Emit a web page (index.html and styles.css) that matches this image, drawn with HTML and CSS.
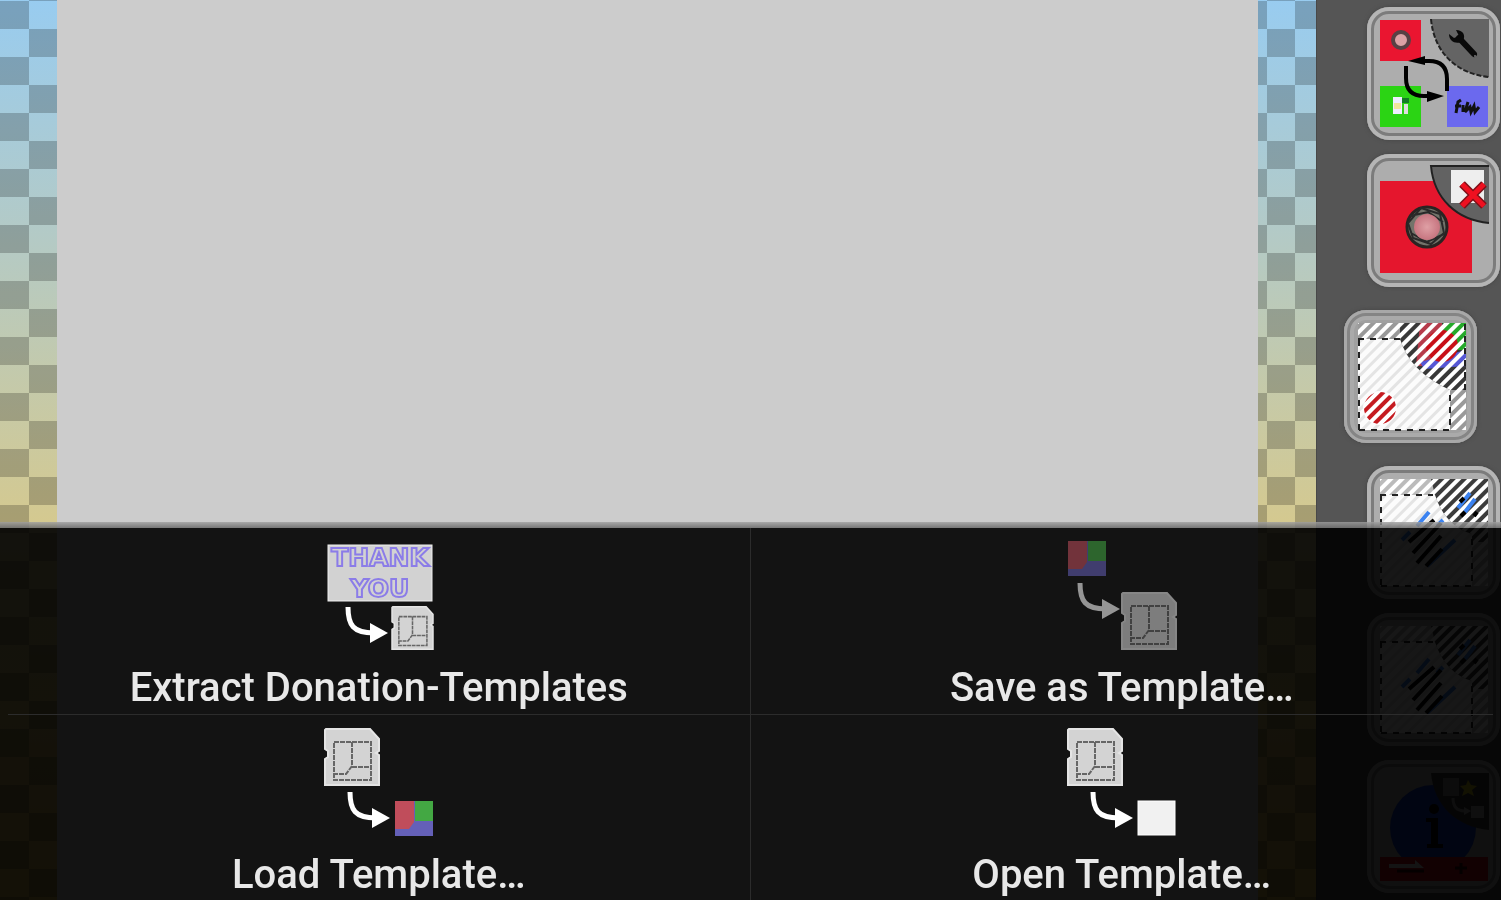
FILE: index.html
```
<!DOCTYPE html>
<html lang="en">
<head>
    <meta charset="utf-8">
    <title>Templates</title>
    <link rel="stylesheet" href="styles.css">
</head>
<body>
    <svg class="defs" aria-hidden="true">
        <defs>
            <pattern id="hatch" width="8" height="8" patternUnits="userSpaceOnUse" patternTransform="rotate(45)">
                <rect width="4" height="8" fill="#fff"/>
            </pattern>
            <pattern id="hatch-light" width="8" height="8" patternUnits="userSpaceOnUse" patternTransform="rotate(45)">
                <rect width="8" height="8" fill="#fcfcfc"/>
                <rect width="3" height="8" fill="#e4e4e4"/>
            </pattern>
            <radialGradient id="lens">
                <stop offset="0" stop-color="#dfa0a5"/>
                <stop offset="1" stop-color="#c77580"/>
            </radialGradient>
            <symbol id="card" viewBox="0 0 56 58">
                <path d="M2 1H46L55 11V23L52 25L55 27V57H1V31L4 29V23L1 21V2Z" fill="#d3d3d3" stroke="#e4e4e4" stroke-width="2"/>
                <path d="M10 14H47V52H10ZM28 14V38L22 46H10M28 39H47" fill="none" stroke="#666" stroke-width="2" stroke-dasharray="5 1"/>
            </symbol>
            <symbol id="arrow" viewBox="0 0 44 38">
                <path d="M3 1C3 19 8 27 29 27" fill="none" stroke="#fff" stroke-width="5"/>
                <path d="M25 17L43 27L25 37Z" fill="#fff"/>
            </symbol>
            <symbol id="panels" viewBox="0 0 38 35">
                <rect width="38" height="35" fill="#6460b8"/>
                <path d="M0 0H19V21L14 28H0Z" fill="#c04d5b"/>
                <path d="M20 0H38V20H20Z" fill="#43a843"/>
            </symbol>
            <symbol id="pen" viewBox="0 0 133 133">
                <rect x="13" y="13" width="108" height="107" fill="url(#hatch-light)"/>
                <path d="M13 13H121V120H105V68Q78 60 68 29H13Z" fill="#3c3c3c"/>
                <path d="M13 13H64L68 29H13ZM105 76H121V120H105Z" fill="#bbb"/>
                <path d="M13 13H121V120H105V68Q78 60 68 29H13Z" fill="url(#hatch)"/>
                <path d="M13 29H66M14 29V120M14 120H105V72" fill="none" stroke="#222" stroke-width="2" stroke-dasharray="6 6"/>
                <path d="M35 74L43 66M50 60L62 46M60 100L88 74M70 60L76 54M91 42L103 27M98 46L108 33" stroke="#3b82f0" stroke-width="4"/>
                <path d="M42 76L67 54M46 87L74 57M50 97L74 70M59 100L75 83M94 50L98 46M93 36L97 32M107 50L110 46" stroke="#000" stroke-width="4"/>
            </symbol>
        </defs>
    </svg>

    <main class="editor">
        <div class="checker checker-left"></div>
        <div class="page"></div>
        <div class="checker checker-right"></div>
        <div class="toolbar">
            <div class="tool-group">
                <button class="tool" aria-label="Switch tool">
                    <svg viewBox="0 0 133 133">
                        <rect x="13" y="13" width="41" height="41" fill="#ea1530"/>
                        <circle cx="34" cy="33" r="8" fill="#dca1a5" stroke="#594044" stroke-width="4"/>
                        <rect x="13" y="79" width="41" height="41" fill="#2bd414"/>
                        <path d="M26 90H35V107H26Z" fill="#eef"/>
                        <path d="M27 96H34V102H27Z" fill="#f0e69a"/>
                        <path d="M35 91H42V96H35Z" fill="#137b25"/>
                        <path d="M37 97H41V107H37Z" fill="#ddd"/>
                        <rect x="80" y="79" width="41" height="41" fill="#6b69ee"/>
                        <path d="M89 106L91 95L94 93M88 99H94M96 105V98M101 95L98 105L103 100L104 105L107 99L108 105L112 100" fill="none" stroke="#111" stroke-width="3"/>
                        <path d="M64 12H122V70C90 67 67 46 64 12Z" fill="#646464"/>
                        <path d="M64 12C67 46 90 67 122 70" fill="none" stroke="#222" stroke-width="2" stroke-dasharray="5 2"/>
                        <path d="M92 31L107 47" stroke="#090909" stroke-width="6" stroke-linecap="round"/>
                        <path d="M82 27C82 35 90 38 96 34C99 28 96 23 89 23L92 29L87 31Z" fill="#090909"/>
                        <circle cx="108" cy="49" r="1" fill="#777"/>
                        <path d="M80 84V72Q80 54 62 54H50M39 59V71Q39 89 57 89H65" fill="none" stroke="#000" stroke-width="4"/>
                        <path d="M41 54L58 49V58ZM77 89L60 84V95Z"/>
                    </svg>
                </button>
                <button class="tool" aria-label="Remove panel">
                    <svg viewBox="0 0 133 133">
                        <rect x="13" y="27" width="92" height="92" fill="#e5162d"/>
                        <circle cx="60" cy="73" r="20" fill="#73736a" stroke="#2a2422" stroke-width="3"/>
                        <path d="M54 54L73 60L77 79L64 90L46 84L41 69ZM43 62L61 58L76 68M77 80L60 88L44 79" fill="none" stroke="#292929" stroke-width="2"/>
                        <circle cx="60" cy="73" r="13" fill="url(#lens)"/>
                        <path d="M64 12H122V69C90 66 67 45 64 12Z" fill="#626262"/>
                        <path d="M122 12H64C67 45 90 66 122 69" fill="none" stroke="#222" stroke-width="2"/>
                        <rect x="84" y="16" width="33" height="33" fill="#eee"/>
                        <path d="M95 30L117 52M117 30L95 52" stroke="#7e1018" stroke-width="8"/>
                        <path d="M95 30L117 52M117 30L95 52" stroke="#ef1020" stroke-width="5"/>
                    </svg>
                </button>
            </div>
            <div class="tool-group">
                <button class="tool tool-active" aria-label="Layers">
                    <svg viewBox="0 0 133 133">
                        <rect x="14" y="13" width="108" height="107" fill="url(#hatch-light)"/>
                        <circle cx="36" cy="98" r="16" fill="#c51b20"/>
                        <path d="M56 13H122V80H106Q66 62 56 29Z" fill="#383838"/>
                        <path d="M76 13H98V56H72Z" fill="#b63b4b"/>
                        <path d="M99 13H122V40H99Z" fill="#25a92a"/>
                        <path d="M76 52L122 40V56L80 59Z" fill="#5557d4"/>
                        <circle cx="98" cy="36" r="16" fill="#c80f17"/>
                        <path d="M14 13H56V29H14ZM106 80H122V120H106Z" fill="#999"/>
                        <path d="M14 13H122V120H106V80Q66 62 56 29H14Z" fill="url(#hatch)"/>
                        <circle cx="36" cy="98" r="17" fill="url(#hatch)"/>
                        <path d="M14 29H56M15 30V120M15 120H106V80M121 14V80" fill="none" stroke="#222" stroke-width="2" stroke-dasharray="6 6"/>
                    </svg>
                </button>
            </div>
            <div class="tool-group">
                <button class="tool" aria-label="Pen"><svg><use href="#pen"/></svg></button>
                <button class="tool" aria-label="Eraser"><svg><use href="#pen"/></svg></button>
                <button class="tool" aria-label="Info">
                    <svg viewBox="0 0 133 133">
                        <circle cx="66" cy="68" r="43" fill="#123bc0"/>
                        <circle cx="67" cy="49" r="5"/>
                        <path d="M59 58H71V84H76V88H60V84H64V62H59Z"/>
                        <rect x="13" y="97" width="108" height="24" fill="#c50d16"/>
                        <path d="M22 104H48V100L57 108H22Z" fill="#ddd"/>
                        <path d="M30 111H57M94 103V114M88 108H100" stroke="#300" stroke-width="3"/>
                        <path d="M64 13H122V70C90 67 67 46 64 13Z" fill="#3c3c3c"/>
                        <path d="M76 18H92V36H76Z" fill="#888"/>
                        <path d="M101 20L104 25L110 26L105 30L107 36L101 33L95 36L97 30L93 26L99 25Z" fill="#d1c21b"/>
                        <path d="M86 38Q86 51 98 51" fill="none" stroke="#999" stroke-width="3"/>
                        <path d="M97 47L104 51L97 55ZM104 46H117V58H104Z" fill="#aaa"/>
                    </svg>
                </button>
            </div>
        </div>
    </main>

    <div class="menu">
        <button class="menu-item">
            <svg class="menu-icon" viewBox="0 0 112 112">
                <rect x="5" y="5" width="104" height="56" fill="#d2d2d2" stroke="#eee"/>
                <text class="thanks" x="57" y="26">THANK</text>
                <text class="thanks" x="57" y="57">YOU</text>
                <use href="#arrow" x="22" y="66" width="44" height="38"/>
                <use href="#card" x="68" y="66" width="43" height="44"/>
            </svg>
            <span>Extract Donation-Templates</span>
        </button>
        <button class="menu-item" disabled>
            <svg class="menu-icon" viewBox="0 0 112 112">
                <use href="#panels" x="2" y="1" width="38" height="35"/>
                <use href="#arrow" x="11" y="42" width="44" height="38"/>
                <use href="#card" x="55" y="52" width="56" height="58"/>
            </svg>
            <span>Save as Template…</span>
        </button>
        <button class="menu-item">
            <svg class="menu-icon" viewBox="0 0 112 112">
                <use href="#card" x="1" y="1" width="56" height="58"/>
                <use href="#arrow" x="24" y="64" width="44" height="38"/>
                <use href="#panels" x="72" y="74" width="38" height="35"/>
            </svg>
            <span>Load Template…</span>
        </button>
        <button class="menu-item">
            <svg class="menu-icon" viewBox="0 0 112 112">
                <use href="#card" x="1" y="1" width="56" height="58"/>
                <use href="#arrow" x="24" y="64" width="44" height="38"/>
                <rect x="72" y="74" width="37" height="34" fill="#f1f1f1" stroke="#fff"/>
            </svg>
            <span>Open Template…</span>
        </button>
    </div>
</body>
</html>
```
FILE: styles.css
```
* {
    box-sizing: border-box;
}

body {
    margin: 0;
    background: #555;
    font-family: Roboto, sans-serif;
    overflow: hidden;
}

button {
    border: none;
    padding: 0;
    background: none;
    font: inherit;
    cursor: pointer;
}

.defs {
    position: absolute;
    width: 0;
    height: 0;
}

.editor {
    display: grid;
    grid-template-columns: 57px 1fr 58px 185px;
    height: 100vh;
}

.page {
    background: #ccc;
}

.checker {
    background-image:
        conic-gradient(rgba(0, 0, 0, 0.21) 25%, transparent 0 50%, rgba(0, 0, 0, 0.21) 0 75%, transparent 0),
        linear-gradient(#98ccf0, #b4cac5 240px, #d4c990 520px, #d8b850);
    background-size: 56px 56px, 100% 100%;
}

.checker-left {
    background-size: 58px 56px, 100% 100%;
    background-position: 0 -27px, 0 0;
}

.checker-right {
    background-position: -19px -27px, 0 0;
}

.toolbar {
    display: flex;
    flex-direction: column;
    gap: 23px;
    padding: 7px 1px 0 0;
    background: #555;
    border-left: 1px solid #484848;
}

.tool-group {
    display: flex;
    flex-direction: column;
    align-items: flex-end;
    gap: 14px;
}

.tool {
    width: 133px;
    height: 133px;
    border-radius: 22px;
    background: #adadad;
    box-shadow: inset 0 0 0 4px #b5b5b5, inset 0 0 0 7px #7c7c7c, 0 0 4px #444;
}

.tool-active {
    margin-right: 23px;
    background: #a0a0a0;
    box-shadow: inset 0 0 0 3px #a8a8a8, inset 0 0 0 6px #858585, inset 0 0 0 10px #aaa, 0 0 4px #444;
}

.tool svg {
    display: block;
    width: 133px;
    height: 133px;
}

/* options menu over the editor */
.menu {
    position: fixed;
    left: 0;
    right: 0;
    bottom: 0;
    display: grid;
    grid-template-columns: 1fr 1fr;
    padding: 6px 8px 0;
    background:
        linear-gradient(rgba(160, 160, 160, 0.8), rgba(110, 110, 110, 0.9)) top / 100% 6px no-repeat,
        linear-gradient(rgba(0, 0, 0, 0.91), rgba(0, 0, 0, 0.91)) 0 6px no-repeat;
}

.menu-item {
    display: flex;
    flex-direction: column;
    align-items: center;
    gap: 16px;
    height: 186px;
    padding-top: 12px;
    color: #e8e8e8;
    font-size: 40px;
    font-weight: 500;
    line-height: 40px;
}

.menu-item:nth-child(odd) {
    border-right: 1px solid #2c2c2c;
}

.menu-item:nth-child(n+3) {
    border-top: 1px solid #2c2c2c;
}

.menu-icon {
    width: 112px;
    height: 112px;
}

.menu-item:disabled .menu-icon {
    opacity: 0.55;
}

.thanks {
    fill: #d2d2d2;
    stroke: #8b7ce8;
    stroke-width: 2px;
    font: bold 25px "DejaVu Sans", sans-serif;
    text-anchor: middle;
}
```
